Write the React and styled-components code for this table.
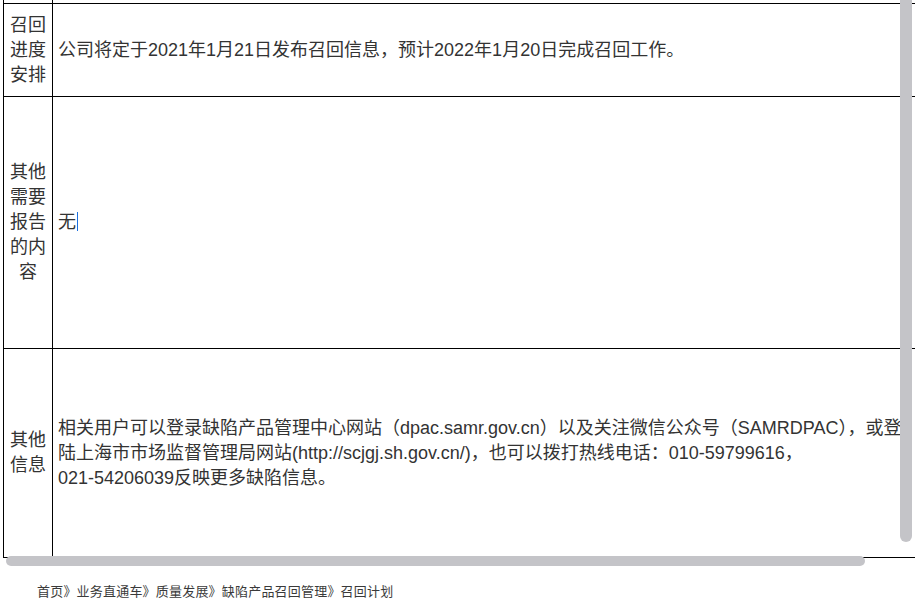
import React, { useLayoutEffect, useRef } from "react";
import styled, { createGlobalStyle } from "styled-components";

const GlobalStyle = createGlobalStyle`
    html, body {
        margin: 0;
        padding: 0;
        background: #fff;
    }
    body {
        font-family: "Liberation Sans", "Noto Sans CJK SC", sans-serif;
        color: #333;
    }
`;

const Page = styled.div`
    width: 915px;
    height: 606px;
    display: flex;
    flex-direction: column;
    overflow: hidden;
`;

const Frame = styled.div`
    position: relative;
    height: 568px;
    flex: none;
`;

const Scroller = styled.div`
    height: 100%;
    overflow: auto;
    scrollbar-width: none;
    padding: 0 0 10px 3px;
    box-sizing: border-box;
    &::-webkit-scrollbar {
        display: none;
    }
`;

const Sheet = styled.table`
    width: 950px;
    table-layout: fixed;
    border-collapse: collapse;
    font-size: 18px;
    line-height: 25px;
    color: #333;
`;

const Row = styled.tr`
    height: ${props => props.h}px;
`;

const Label = styled.td`
    width: 49px;
    box-sizing: border-box;
    border: 1px solid #000;
    padding: 0 5px;
    text-align: center;
    vertical-align: middle;
`;

const Cell = styled.td`
    border: 1px solid #000;
    padding: 0 5px;
    vertical-align: middle;
    white-space: nowrap;
`;

const Caret = styled.span`
    display: inline-block;
    width: 1px;
    height: 19px;
    margin-left: 1px;
    background: #1a6fe0;
    vertical-align: -3px;
`;

const Thumb = styled.div`
    position: absolute;
    background: #c4c4c8;
    border-radius: 6px;
    ${props => props.vertical
        ? "top: -10px; right: 3px; width: 12px; height: 552px;"
        : "bottom: 2px; left: 6px; width: 859px; height: 10px;"}
`;

const Crumbs = styled.div`
    padding: 15px 0 0 37px;
    font-size: 13px;
    line-height: 18px;
    letter-spacing: 0.2px;
    color: #3a3a3a;
`;

const App = () => {
    const scroller = useRef(null);

    useLayoutEffect(() => {
        const el = scroller.current;
        if (el) {
            el.scrollTop = el.scrollHeight;
            el.scrollLeft = 0;
        }
    }, []);

    return (
        <Page>
            <GlobalStyle />
            <Frame>
                <Scroller ref={scroller}>
                    <Sheet>
                        <tbody>
                            <Row h={80}>
                                <Label />
                                <Cell />
                            </Row>
                            <Row h={93}>
                                <Label>召回进度安排</Label>
                                <Cell>公司将定于2021年1月21日发布召回信息，预计2022年1月20日完成召回工作。</Cell>
                            </Row>
                            <Row h={252}>
                                <Label>其他需要报告的内容</Label>
                                <Cell>无<Caret /></Cell>
                            </Row>
                            <Row h={209}>
                                <Label>其他信息</Label>
                                <Cell>
                                    相关用户可以登录缺陷产品管理中心网站（dpac.samr.gov.cn）以及关注微信公众号（SAMRDPAC），或登<br />
                                    陆上海市市场监督管理局网站(http://scjgj.sh.gov.cn/)，也可以拨打热线电话：010-59799616，<br />
                                    021-54206039反映更多缺陷信息。
                                </Cell>
                            </Row>
                        </tbody>
                    </Sheet>
                </Scroller>
                <Thumb vertical />
                <Thumb />
            </Frame>
            <Crumbs>首页》业务直通车》质量发展》缺陷产品召回管理》召回计划</Crumbs>
        </Page>
    );
};

export default App;
